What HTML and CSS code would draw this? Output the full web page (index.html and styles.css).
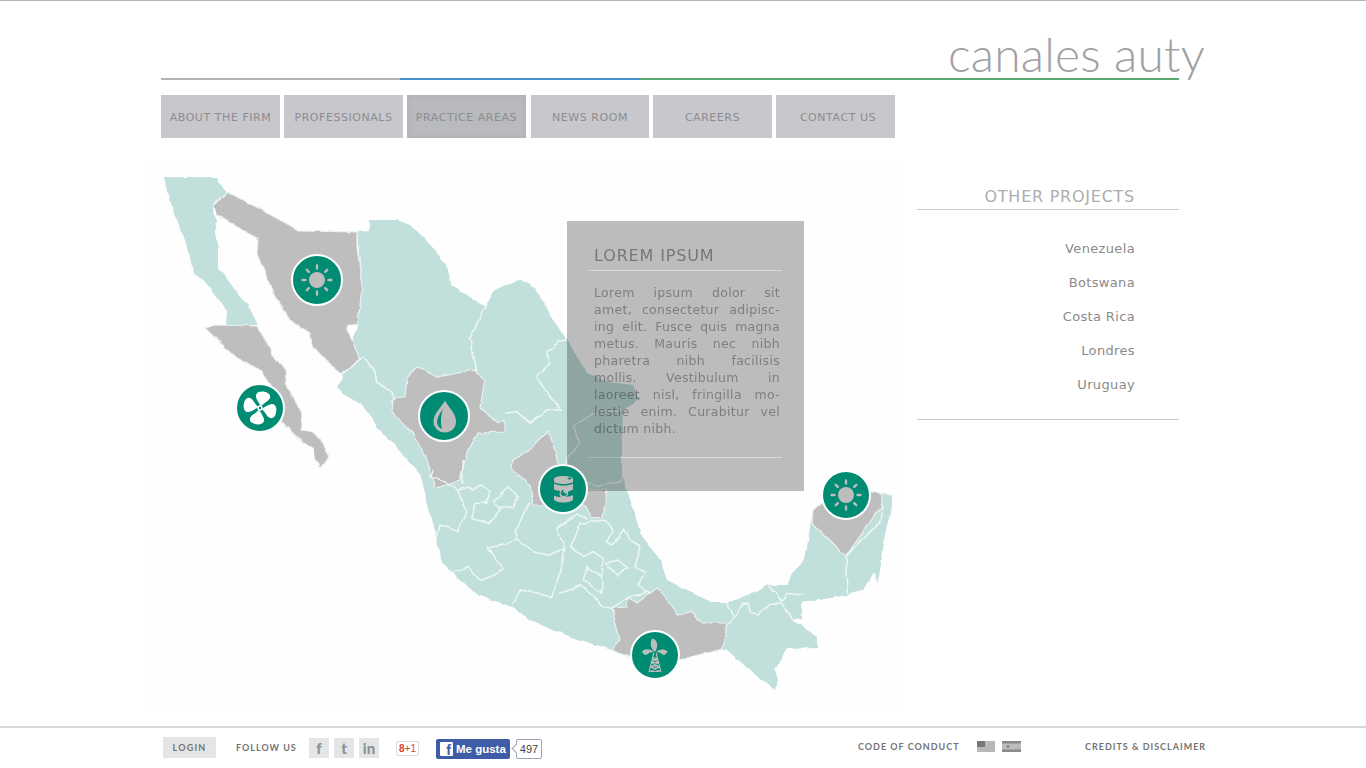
FILE: index.html
```html
<!DOCTYPE html>
<html lang="en">
<head>
<meta charset="utf-8">
<title>Canales Auty</title>
<link rel="stylesheet" href="styles.css">
</head>
<body>
<div class="page">
  <header class="header">
    <div class="logo">canales auty</div>
    <div class="rule"></div>
  </header>
  <nav class="nav">
    <a class="nav-item">ABOUT THE FIRM</a>
    <a class="nav-item">PROFESSIONALS</a>
    <a class="nav-item active">PRACTICE AREAS</a>
    <a class="nav-item nav-news">NEWS ROOM</a>
    <a class="nav-item">CAREERS</a>
    <a class="nav-item nav-contact">CONTACT US</a>
  </nav>
  <main class="main">
    <section class="map">
      <svg class="map-art" viewBox="140 150 770 570" width="770" height="570" aria-hidden="true">
        <defs>
          <filter id="rough" x="0" y="0" width="100%" height="100%" filterUnits="objectBoundingBox">
            <feTurbulence type="fractalNoise" baseFrequency="0.09" numOctaves="2" seed="4" result="n"/>
            <feDisplacementMap in="SourceGraphic" in2="n" scale="4" xChannelSelector="R" yChannelSelector="G"/>
            <feGaussianBlur stdDeviation="0.35"/>
          </filter>
        </defs>
        <rect x="150" y="160" width="750" height="550" fill="#fefefe"/>
        <g filter="url(#rough)">
        <path class="teal" d="M164 177L218 177 218 183 226 191 215 203 213 213 217 220 215 233 218 250 218 267 228 280 240 297 248 305 258 325 226 325 227 310 217 297 207 283 193 273 190 257 185 240 177 220 170 203Z"/>
        <path class="teal" d="M357 232L369 231 369 220 397 220 410 225 423 238 445 262 452 285 485 307 495 290 503 286 520 281 530 283 543 300 553 320 567 340 573 350 587 373 607 382 633 385 640 400 623 410 622 437 622 477 633 507 640 533 660 560 667 580 687 590 713 603 727 603 760 590 767 585 787 585 792 573 805 560 810 527 813 510 830 495 882 493 892 495 892 507 885 533 883 550 878 583 873 573 863 590 850 593 847 595 802 603 802 618 792 620 818 637 818 647 787 648 775 670 778 680 775 690 753 673 727 650 723 648 680 660 612 650 580 640 553 630 530 620 513 607 477 595 453 573 440 560 437 537 433 523 420 473 380 430 362 405 345 395 337 387 343 378 342 374 358 323 362 287Z"/>
        <path class="grey" d="M205 328L217 325 257 326 267 343 272 353 285 370 287 387 302 413 302 430 313 432 323 443 330 457 320 468 315 460 313 450 297 437 282 423 270 385 260 370 237 358 217 340Z"/>
        <path class="grey" d="M227 191L300 231 357 232 357 247 362 287 358 323 347 327 355 347 360 360 342 374 327 362 312 345 310 333 290 320 273 293 257 253 258 238 237 227 217 215 215 205Z"/>
        <path class="grey" d="M407 377L418 367 437 377 458 373 475 370 485 380 480 407 497 423 505 420 505 432 478 433 467 453 460 480 435 488 425 457 413 433 392 412 393 398 405 397Z"/>
        <path class="grey" d="M547 432L555 450 558 466 580 480 590 490 607 490 603 517 592 518 585 505 560 505 533 505 530 485 511 468 512 460 530 450Z"/>
        <path class="grey" d="M813 510L812 523 846 556 882 505 882 493 850 490 830 495Z"/>
        <path class="grey" d="M612 608L627 607 628 597 637 603 657 588 670 603 678 615 690 612 702 623 727 623 723 648 680 660 653 667 612 650 620 640Z"/>
        <g class="lines" transform="translate(420 460) scale(.3333)">
          <polyline points="40,30 30,50 70,65 100,75 115,95 140,150 115,215 60,195 50,240"/>
          <polyline points="115,90 150,80 155,90 185,75 210,95 200,130 165,130 155,175 205,190 240,150 220,130 265,80 295,110 280,140 235,145"/>
          <polyline points="330,125 285,215 290,240 205,265 250,325 185,365 165,345 145,320 90,340"/>
          <polyline points="290,240 340,275 385,285 435,265 410,205 470,165 500,175"/>
          <polyline points="435,265 420,340 405,380 395,410 300,390 280,435"/>
          <polyline points="455,260 480,190 555,180 580,215 555,245 575,255 610,210 630,235 660,260 645,320 675,340 650,375 690,400"/>
          <polyline points="455,260 490,290 520,275 550,295 545,350 500,320 490,360 545,400 550,370 545,350"/>
          <polyline points="420,400 485,375 520,410 550,440 575,445 630,410 690,395"/>
          <polyline points="555,310 590,300 625,325 590,345 555,310"/>
          <polyline points="920,430 945,470 925,490"/>
          <polyline points="945,470 965,430 985,430 990,455 1015,465 1050,430 1085,430 1120,480"/>
          <polyline points="1040,375 1065,395 1085,425 1100,400 1145,405"/>
          <polyline points="1278,290 1285,400"/>
          <polyline points="1385,130 1385,180 1278,290"/>
          <polyline points="130,0 125,75"/>
        </g>
        <g class="lines" transform="translate(150 170) scale(.3333)">
          <polyline points="1005,410 960,505 980,600"/>
          <polyline points="575,612 640,563 675,600 680,640 725,665 735,685"/>
          <polyline points="1065,730 1100,725 1140,760"/>
        </g>
        <g class="lines" transform="translate(530 210) scale(.3333)">
          <polyline points="110,390 85,395 50,430 60,460 20,500 60,560 95,600 50,600 0,640"/>
          <polyline points="275,600 190,610 130,650 150,700 110,745 125,800 200,830 275,810"/>
        </g>
        </g>
      </svg>

      <aside class="popup">
        <h2 class="popup-title">LOREM IPSUM</h2>
        <p class="popup-text">
          <span class="ln">Lorem ipsum dolor sit</span>
          <span class="ln">amet, consectetur adipisc-</span>
          <span class="ln">ing elit. Fusce quis magna</span>
          <span class="ln">metus. Mauris nec nibh</span>
          <span class="ln">pharetra nibh facilisis</span>
          <span class="ln">mollis. Vestibulum in</span>
          <span class="ln">laoreet nisl, fringilla mo-</span>
          <span class="ln">lestie enim. Curabitur vel</span>
          <span class="ln ln-last">dictum nibh.</span>
        </p>
      </aside>

      <a class="pin pin-sonora">
        <svg viewBox="0 0 48 48" width="48" height="48"><use href="#sun"/></svg>
      </a>
      <a class="pin pin-baja">
        <svg viewBox="0 0 48 48" width="48" height="48">
          <g fill="#fff">
            <path id="petal" d="M25 22C22 18 19.500 14 20 11C21 7 28 6.500 32.500 9.500C36 12.500 33.500 16 30 18Z"/>
            <use href="#petal" transform="rotate(90 24 24)"/>
            <use href="#petal" transform="rotate(180 24 24)"/>
            <use href="#petal" transform="rotate(270 24 24)"/>
            <circle cx="24" cy="24" r="2.800"/>
          </g>
          <circle cx="24" cy="24" r="1.300" fill="#008c72"/>
        </svg>
      </a>
      <a class="pin pin-durango">
        <svg viewBox="0 0 48 48" width="48" height="48">
          <path fill="#bdbdbd" fill-rule="evenodd" d="M25 8.500C28 15 36 21 36 29.500C36 36.500 30.500 40.500 25 40.500C18.500 40.500 13.500 35.500 13.500 29.500C13.500 21 22 15 25 8.500ZM23 17C19.500 22 17 26 17 30C17 33 19 36 22 37C20.500 31 20.500 24 23 17Z"/>
        </svg>
      </a>
      <a class="pin pin-slp">
        <svg viewBox="0 0 48 48" width="48" height="48">
          <path fill="#bdbdbd" fill-rule="evenodd" d="M15 14C15 12 19.500 11 24.500 11C29.500 11 34 12 34 14L34 16.500C34 18 29.500 19 24.500 19C19.500 19 15 18 15 16.500ZM28.500 13.500a2 1 0 1 0 4 0a2 1 0 1 0 -4 0Z"/>
          <path fill="#bdbdbd" fill-rule="evenodd" d="M15 18.500C17 20 21 20.500 24.500 20.500C28 20.500 32 20 34 18.500L34 24.500C32 26 28 26.500 29 27.500C29.500 30 28 32 25.500 32C27 32 32 31.500 34 30L34 34.500C34 36 29.500 37.500 24.500 37.500C19.500 37.500 15 36 15 34.500L15 30.500C17 31.500 20 32 22 32.300C21 31.500 20.500 30 20.500 28.500C20.500 27.500 21 26.800 21.500 26C19 25.800 16.500 25.300 15 24.500ZM24.500 24.500C22.500 25.500 21.800 27 21.800 28.500C21.800 30 23 31 25 31C27 31 28 29.800 28 28.500L25.500 28.500L25.500 26.500L24 27.800Z"/>
        </svg>
      </a>
      <a class="pin pin-yucatan">
        <svg viewBox="0 0 48 48" width="48" height="48"><use href="#sun"/></svg>
      </a>
      <a class="pin pin-oaxaca">
        <svg viewBox="0 0 48 48" width="48" height="48">
          <path fill="#bdbdbd" d="M24 21C19 17 19 12 21 7.500C25.500 8 28.500 14 24 21ZM23 21.500C20 17.500 14 17.500 11 20.500C13 24.500 15 24.500 17 22.800C19 21.300 21 21 23 21.500ZM25 21.500C28 18 33 17.500 36.500 20.500C34.500 24.500 32.500 24.500 30.500 22.800C29 21.500 27 21 25 21.500Z"/>
          <g fill="none" stroke="#bdbdbd" stroke-width="1.100">
            <path d="M22.800 22L18 41M25.200 22L30 41M21.500 27H26.500M20.500 31.500H27.500M19.500 36H28.500M19 40.500H29M21.500 27L27.500 31.500M26.500 27L20.500 31.500M20.500 31.500L28.500 36M27.500 31.500L19.500 36M19.500 36L29 40.500M28.500 36L19 40.500"/>
          </g>
        </svg>
      </a>
      <svg class="sprite" width="0" height="0" aria-hidden="true">
        <defs>
          <g id="sun">
            <circle cx="24" cy="24" r="8" fill="#bdbdbd"/>
            <g stroke="#bdbdbd" stroke-width="2.400" stroke-linecap="round">
              <path d="M24 9.500V12.500M24 35.500V38.500M9.500 24H12.500M35.500 24H38.500M13.800 13.800L15.800 15.800M32.200 32.200L34.200 34.200M13.800 34.200L15.800 32.200M32.200 15.800L34.200 13.800"/>
            </g>
          </g>
        </defs>
      </svg>
    </section>
    <aside class="projects">
      <h2 class="projects-title">OTHER PROJECTS</h2>
      <ul class="projects-list">
        <li>Venezuela</li>
        <li>Botswana</li>
        <li>Costa Rica</li>
        <li>Londres</li>
        <li>Uruguay</li>
      </ul>
    </aside>
  </main>
</div>
<footer class="footer">
  <div class="footer-inner">
    <a class="login">LOGIN</a>
    <span class="caps follow">FOLLOW US</span>
    <a class="social social-first">f</a>
    <a class="social">t</a>
    <a class="social">in</a>
    <a class="gplus"><span class="gplus-g">8</span><span class="gplus-p">+1</span></a>
    <a class="fb"><span class="fb-f">f</span>Me gusta</a>
    <span class="fb-count">497</span>
    <span class="caps conduct">CODE OF CONDUCT</span>
    <svg class="flag flag-us" viewBox="0 0 18 11" width="18" height="11" aria-hidden="true">
      <rect width="18" height="11" fill="#e4e4e4"/>
      <path d="M0 1H18M0 3H18M0 5H18M0 7H18M0 9H18M0 11H18" stroke="#8b8b8b"/>
      <rect width="8" height="6" fill="#777"/>
    </svg>
    <svg class="flag flag-other" viewBox="0 0 19 11" width="19" height="11" aria-hidden="true">
      <rect width="19" height="11" fill="#bbb"/>
      <rect width="19" height="2.500" fill="#8a8a8a"/>
      <rect y="8.500" width="19" height="2.500" fill="#8a8a8a"/>
      <circle cx="6" cy="5.500" r="1.200" fill="#777"/>
    </svg>
    <span class="caps credits">CREDITS &amp; DISCLAIMER</span>
  </div>
</footer>
</body>
</html>
```
FILE: styles.css
```css
* { box-sizing: border-box; }
html, body { margin: 0; padding: 0; background: #fff; }
body {
  height: 768px;
  overflow: hidden;
  border-top: 1px solid #b5b5b8;
  font-family: "DejaVu Sans", Verdana, sans-serif;
  color: #888;
}
.page { width: 1044px; margin: 0 auto; }

.header { height: 79px; display: flex; flex-direction: column; }
.logo {
  height: 77px;
  padding-top: 25px;
  text-align: right;
  font-family: "Lato", sans-serif;
  font-weight: 300;
  font-size: 48px;
  line-height: 56px;
  letter-spacing: .2px;
  color: #a0a1a3;
  white-space: nowrap;
}
.rule {
  width: 1018px;
  height: 2px;
  background: linear-gradient(to right, #b3b3b6 0, #b3b3b6 239px, #4a90d0 239px, #4a90d0 479px, #5aa86e 479px, #5aa86e 100%);
}

.nav { display: flex; gap: 4px; margin-top: 15px; }
.nav-item {
  width: 119px;
  height: 43px;
  padding-top: 1px;
  display: flex;
  align-items: center;
  justify-content: center;
  background: #c8c8cc;
  color: #8c8c91;
  font-size: 11px;
  letter-spacing: .55px;
  white-space: nowrap;
}
.nav-item.active {
  background: #b9babd;
  box-shadow: inset 0 0 6px rgba(0, 0, 0, .06);
}
.nav-item.nav-news { width: 118px; margin-left: 1px; }
.nav-item.nav-contact { padding-left: 5px; }

.main { display: flex; margin: 12px 0 6px; height: 570px; }
.map {
  position: relative;
  isolation: isolate;
  width: 770px;
  height: 570px;
  margin-left: -21px;
  flex: none;
}
.map-art { display: block; }
.sprite { position: absolute; }
.teal { fill: #c1dfdb; }
.grey { fill: #bebebe; stroke: #e9f2f0; stroke-width: 1.200; }
.lines polyline {
  fill: none;
  stroke: #eef7f5;
  stroke-width: 1.500;
  vector-effect: non-scaling-stroke;
  stroke-linejoin: round;
}

.popup {
  position: absolute;
  left: 427px;
  top: 71px;
  width: 237px;
  height: 270px;
  padding: 0 22px;
  background: #bdbdbd;
  mix-blend-mode: multiply;
  z-index: 1;
  color: #808080;
}
.popup-title {
  margin: 0;
  height: 50px;
  padding: 25px 0 0 5px;
  border-bottom: 1px solid #d8d8d8;
  font-size: 16px;
  font-weight: 400;
  line-height: 20px;
  letter-spacing: .85px;
  color: #777;
}
.popup-text {
  margin: 0;
  height: 187px;
  padding: 13px 2px 0 5px;
  border-bottom: 1px solid #d8d8d8;
  font-size: 12.500px;
  line-height: 17px;
  letter-spacing: .3px;
}
.ln {
  display: block;
  white-space: normal;
  text-align: justify;
  text-align-last: justify;
}
.ln.ln-last { text-align-last: left; }

.pin {
  position: absolute;
  z-index: 2;
  width: 50px;
  height: 50px;
  display: flex;
  align-items: center;
  justify-content: center;
  border: 2px solid #fff;
  border-radius: 50%;
  background: #008c72;
}
.pin svg { display: block; flex: none; }
.pin-sonora { left: 151px; top: 104px; width: 52px; height: 52px; }
.pin-baja { left: 95px; top: 233px; }
.pin-durango { left: 278px; top: 240px; width: 52px; height: 52px; }
.pin-slp { left: 398px; top: 314px; }
.pin-yucatan { left: 681px; top: 320px; }
.pin-oaxaca { left: 490px; top: 480px; }

.projects { width: 262px; margin-left: 7px; flex: none; }
.projects-title {
  margin: 0;
  height: 60px;
  padding: 37px 44px 0 0;
  border-bottom: 1px solid #ccc;
  text-align: right;
  font-size: 16px;
  font-weight: 400;
  line-height: 20px;
  letter-spacing: .75px;
  color: #adadad;
}
.projects-list {
  margin: 0;
  height: 210px;
  padding: 22px 44px 0 0;
  list-style: none;
  border-bottom: 1px solid #ccc;
  text-align: right;
  font-size: 13px;
  line-height: 34px;
  letter-spacing: .35px;
  color: #8a8a8a;
}

.footer { height: 41px; border-top: 2px solid #d8d8d8; }
.footer-inner {
  width: 1044px;
  height: 39px;
  margin: 0 auto;
  display: flex;
  align-items: flex-start;
  font-family: "Lato", sans-serif;
}
.footer-inner > * { flex: none; }
.caps {
  font-size: 9px;
  font-weight: 700;
  line-height: 12px;
  letter-spacing: 1px;
  color: #747474;
  white-space: nowrap;
}
.login {
  width: 53px;
  height: 21px;
  margin: 9px 0 0 2px;
  background: #e3e5e6;
  color: #747474;
  font-size: 9px;
  font-weight: 700;
  letter-spacing: 1.200px;
  line-height: 21px;
  text-align: center;
}
.follow { margin: 14px 0 0 20px; width: 59px; }
.social {
  width: 20px;
  height: 20px;
  margin: 10px 5px 0 0;
  background: #e3e5e6;
  color: #8d9194;
  font-size: 15px;
  font-weight: 900;
  line-height: 20px;
  text-align: center;
}
.social-first { margin-left: 14px; }
.gplus {
  width: 23px;
  height: 15px;
  margin: 13px 0 0 12px;
  border: 1px solid #ddd;
  border-radius: 2px;
  font-family: "Liberation Sans", sans-serif;
  font-size: 10px;
  line-height: 13px;
  text-align: center;
  white-space: nowrap;
}
.gplus-g { color: #d9432f; font-weight: 700; }
.gplus-p { color: #d9432f; }
.fb {
  width: 74px;
  height: 20px;
  margin: 11px 0 0 17px;
  display: flex;
  align-items: center;
  padding-left: 4px;
  gap: 3px;
  border-radius: 2px;
  background: #3f5ca6;
  color: #fff;
  font-family: "Liberation Sans", sans-serif;
  font-size: 11.500px;
  font-weight: 700;
  white-space: nowrap;
}
.fb-f {
  width: 13px;
  height: 14px;
  background: #fff;
  color: #3f5ca6;
  border-radius: 1px;
  font-size: 14px;
  line-height: 17px;
  text-align: right;
  padding-right: 2px;
}
.fb-count {
  position: relative;
  width: 26px;
  height: 20px;
  margin: 11px 0 0 6px;
  border: 1px solid #9aa2b4;
  border-radius: 2px;
  background: #fff;
  color: #444;
  font-family: "Liberation Sans", sans-serif;
  font-size: 11px;
  line-height: 18px;
  text-align: center;
}
.fb-count::before {
  content: "";
  position: absolute;
  left: -4px;
  top: 5px;
  width: 6px;
  height: 6px;
  background: #fff;
  border-left: 1px solid #9aa2b4;
  border-bottom: 1px solid #9aa2b4;
  transform: rotate(45deg);
}
.conduct { margin: 13px 0 0 316px; width: 100px; }
.flag { margin-top: 13px; display: block; }
.flag-us { margin-left: 19px; }
.flag-other { margin-left: 7px; }
.credits { margin: 13px 0 0 64px; }
```
